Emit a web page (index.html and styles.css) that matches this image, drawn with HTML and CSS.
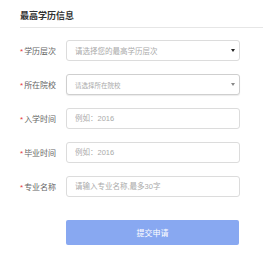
FILE: index.html
```html
<!DOCTYPE html>
<html lang="zh-CN">
<head>
    <meta charset="UTF-8">
    <meta name="viewport" content="width=device-width, initial-scale=1.0">
    <title>最高学历信息</title>
    <link rel="stylesheet" href="styles.css">
</head>
<body>
    <div class="panel">
        <h2 class="title">最高学历信息</h2>
        <form class="form">
            <div class="row">
                <label class="label"><span class="star">*</span>学历层次</label>
                <div class="field select">
                    <span class="placeholder">请选择您的最高学历层次</span>
                    <span class="arrow"></span>
                </div>
            </div>
            <div class="row">
                <label class="label"><span class="star">*</span>所在院校</label>
                <div class="field select select-alt">
                    <span class="placeholder small">请选择所在院校</span>
                    <span class="arrow arrow-gray"></span>
                </div>
            </div>
            <div class="row">
                <label class="label"><span class="star">*</span>入学时间</label>
                <input class="field" type="text" placeholder="例如：2016">
            </div>
            <div class="row">
                <label class="label"><span class="star">*</span>毕业时间</label>
                <input class="field" type="text" placeholder="例如：2016">
            </div>
            <div class="row">
                <label class="label"><span class="star">*</span>专业名称</label>
                <input class="field" type="text" placeholder="请输入专业名称,最多30字">
            </div>
            <div class="actions">
                <button type="button" class="submit">提交申请</button>
            </div>
        </form>
    </div>
</body>
</html>
```

FILE: styles.css
```css
* {
    margin: 0;
    padding: 0;
    box-sizing: border-box;
    font-family: "Liberation Sans", "Noto Sans CJK SC", sans-serif;
}

body {
    background: #fff;
}

.panel {
    padding: 10px 0 0 20px;
}

.title {
    font-size: 9px;
    font-weight: bold;
    color: #333;
    line-height: 12px;
    padding-bottom: 5px;
    border-bottom: 1px solid #e6e6e6;
}

.form {
    padding-top: 12px;
}

.row {
    display: flex;
    align-items: center;
    height: 21px;
    margin-bottom: 13px;
}

.label {
    width: 46px;
    font-size: 8px;
    color: #666;
}

.star {
    color: #e4393c;
    margin-right: 1px;
}

.field {
    width: 174px;
    height: 21px;
    border: 1px solid #dcdcdc;
    border-radius: 3px;
    padding: 0 8px;
    font-size: 7.5px;
    color: #333;
    outline: none;
    background: #fff;
}

.field::placeholder {
    color: #aaa;
}

.select {
    display: flex;
    align-items: center;
    justify-content: space-between;
}

.select-alt {
    border-color: #cfcfcf;
    box-shadow: 0 1px 1px rgba(0, 0, 0, 0.08);
}

.placeholder {
    color: #aaa;
    font-size: 7.5px;
}

.placeholder.small {
    font-size: 6.5px;
}

.arrow {
    width: 0;
    height: 0;
    border-left: 2px solid transparent;
    border-right: 2px solid transparent;
    border-top: 3px solid #222;
    margin-right: -4px;
}

.arrow-gray {
    border-top-color: #888;
}

.actions {
    padding: 10px 0 0 46px;
}

.submit {
    width: 173px;
    height: 25px;
    border: none;
    border-radius: 2px;
    background: #88a8f1;
    color: #fff;
    font-size: 8px;
    cursor: pointer;
}
```
